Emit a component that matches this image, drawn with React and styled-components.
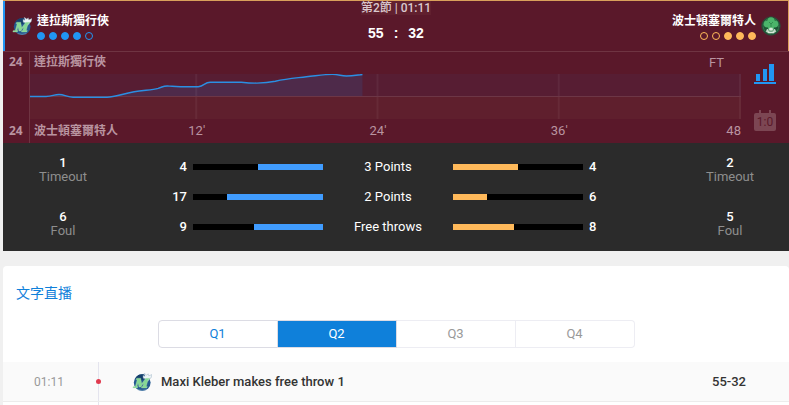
import React, { useState } from "react";
import styled, { createGlobalStyle } from "styled-components";

const GlobalStyle = createGlobalStyle`
  * { box-sizing: border-box; }
  body {
    margin: 0;
    background: #f0f0f0;
    font-family: Roboto, "Noto Sans CJK TC", sans-serif;
    font-size: 13px;
    color: #fff;
  }
  button { font: inherit; padding: 0; margin: 0; cursor: pointer; }
  h2, p { margin: 0; }
`;

const Page = styled.main`
  padding-left: 3px;
`;

const ScoreHeader = styled.header`
  display: grid;
  grid-template-columns: 1fr auto 1fr;
  height: 52px;
  background: #5a182a;
  border-top: 1px solid #d9a05b;
  border-bottom: 1px solid #6f3442;
`;

const Team = styled.div`
  display: flex;
  flex-direction: ${(p) => (p.$away ? "row-reverse" : "row")};
  gap: 5px;
  padding: 12px 7px 0;
  border-${(p) => (p.$away ? "right" : "left")}: ${(p) => (p.$away ? "1px solid #d9a05b" : "2px solid #2196f3")};
`;

const LogoSlot = styled.span`
  display: flex;
  padding-top: 3px;
`;

const TeamInfo = styled.div`
  display: flex;
  flex-direction: column;
  gap: 2px;
  align-items: ${(p) => (p.$away ? "flex-end" : "flex-start")};
`;

const TeamName = styled.span`
  font-size: 12px;
  line-height: 17px;
  font-weight: 700;
  white-space: nowrap;
`;

const Dots = styled.div`
  display: flex;
  gap: 4px;
`;

const Dot = styled.i`
  width: 8px;
  height: 8px;
  border-radius: 50%;
  border: 1px solid ${(p) => p.$color};
  background: ${(p) => (p.$filled ? p.$color : "transparent")};
`;

const Clock = styled.div`
  display: flex;
  flex-direction: column;
  align-items: center;
  gap: 10px;
  white-space: nowrap;
`;

const Period = styled.span`
  font-size: 12px;
  line-height: 14px;
  font-weight: 500;
  color: #dac8cd;
  background: #61202f;
`;

const Score = styled.strong`
  display: flex;
  gap: 10px;
  font-family: "Liberation Sans", Arial, sans-serif;
  font-size: 14px;
  line-height: 16px;
`;

const Momentum = styled.section`
  display: grid;
  grid-template-columns: 27px 1fr 48px;
  height: 91px;
  background: #5a182a;
  color: #b994a0;
`;

const Leads = styled.div`
  display: flex;
  flex-direction: column;
  justify-content: space-between;
  padding: 1px 0 4px 6px;
  font-family: "Open Sans", sans-serif;
  font-size: 12px;
  line-height: 17px;
  font-weight: 700;
  border-right: 1px solid #6f3442;
`;

const Graph = styled.div`
  min-width: 0;
`;

const GraphHead = styled.div`
  display: flex;
  justify-content: space-between;
  padding: 2px 17px 3px 4px;
  line-height: 17px;
`;

const Plot = styled.svg`
  display: block;
  width: 100%;
  height: 46px;
`;

const Axis = styled.div`
  display: grid;
  grid-template-columns: 76fr 181fr 181fr 181fr 91fr;
  padding-top: 2px;
  line-height: 17px;
`;

const AxisTeam = styled(TeamName)`
  grid-area: 1 / 1 / 2 / 3;
  padding: 1px 0 0 4px;
`;

const Tick = styled.span`
  grid-row: 1;
  grid-column: ${(p) => p.$col};
  text-align: ${(p) => (p.$last ? "right" : "center")};
`;

const ViewSwitch = styled.div`
  display: flex;
  flex-direction: column;
  align-items: center;
  gap: 25px;
  padding-top: 12px;
`;

const IconButton = styled.button`
  display: block;
  width: 22px;
  height: 21px;
  border: 0;
  background: none;
  svg { display: block; }
`;

const Stats = styled.section`
  display: grid;
  grid-template-columns: 120px 1fr 118px;
  height: 108px;
  background: #2b2b2b;
`;

const SideStats = styled.div`
  display: flex;
  flex-direction: column;
  gap: 26px;
  padding-top: 13px;
  text-align: center;
  line-height: 14px;
`;

const SideValue = styled.div`
  font-weight: 500;
`;

const SideLabel = styled.div`
  color: #8e8e8e;
`;

const BarRows = styled.div`
  display: flex;
  flex-direction: column;
  gap: 10px;
  padding-top: 14px;
`;

const BarRow = styled.div`
  display: grid;
  grid-template-columns: 70px 1fr 1fr 1fr 88px;
  align-items: center;
  line-height: 20px;
  font-weight: 500;
  text-align: center;
`;

const BarValue = styled.span`
  padding: 0 6px;
  text-align: ${(p) => (p.$away ? "left" : "right")};
`;

const BarLabel = styled.span`
  font-weight: 400;
`;

const Track = styled.div`
  display: flex;
  justify-content: ${(p) => (p.$away ? "flex-start" : "flex-end")};
  height: 6px;
  background: #000;
`;

const Fill = styled.div`
  background: ${(p) => (p.$away ? "#ffb95a" : "#409cff")};
`;

const Feed = styled.section`
  margin-top: 15px;
  background: #fff;
  border-radius: 4px 4px 0 0;
  color: #333;
`;

const FeedTitle = styled.h2`
  padding: 17px 13px 0;
  font-size: 14px;
  line-height: 20px;
  font-weight: 400;
  color: #0f80da;
`;

const Tabs = styled.div`
  display: flex;
  width: 477px;
  max-width: 100%;
  margin: 17px auto 14px;
  line-height: 26px;
`;

const Tab = styled.button`
  flex: 1;
  height: 28px;
  border: 1px solid ${(p) => (p.disabled ? "#ededf3" : "#dcdce4")};
  border-left-width: ${(p) => (p.$first ? 1 : 0)}px;
  border-radius: ${(p) => (p.$first ? "4px 0 0 4px" : p.$last ? "0 4px 4px 0" : "0")};
  background: ${(p) => (p.$active ? "#0f80da" : "#fff")};
  color: ${(p) => (p.$active ? "#fff" : p.disabled ? "#999" : "#0f80da")};
`;

const EventList = styled.div`
  display: flex;
  flex-direction: column;
`;

const EventRow = styled.div`
  display: grid;
  grid-template-columns: 95px 34px 29px 1fr 120px;
  align-items: center;
  height: ${(p) => (p.$empty ? 4 : 40)}px;
  background: ${(p) => (p.$empty ? "#fff" : "#fafafa")};
  border-bottom: ${(p) => (p.$empty ? 0 : 1)}px solid #ececec;
  font-weight: 500;
`;

const EventTime = styled.time`
  text-align: center;
  padding-right: 3px;
  font-size: 12px;
  font-weight: 400;
  color: #999;
`;

const Timeline = styled.span`
  display: flex;
  align-items: center;
  align-self: stretch;
  border-left: 1px solid #e4e4ee;
`;

const Marker = styled.i`
  width: 5px;
  height: 5px;
  margin-left: -3px;
  border-radius: 50%;
  background: #e03a4e;
`;

const EventScore = styled.span`
  text-align: center;
`;

function MavsLogo() {
  return (
    <svg width="20" height="20" viewBox="0 0 20 20" role="img" aria-label="達拉斯獨行俠">
      <circle cx="10.2" cy="10.6" r="8.4" fill="#24598f" />
      <path d="M3.2 6.6A8.4 8.4 0 0 1 12 2.4l1.6 4.2-5 2.2z" fill="#143f6b" />
      <path d="M11 3.4l2 .9-.8-3 2.6 1.8 1.4-1.3.6 2L20 2.6l-1 3.4-1.8 1-1.4 2.4-2-2.4-2.6-.8z" fill="#eef5f7" stroke="#8aa5ba" strokeWidth=".4" />
      <path d="M.8 16h4.6l.5-1.6H5l1-3.6 1 4.2h1.8l3-4.2-1 3.6h-1L9.400 16h5.400l.5-1.600h-1.100l1.900-6.600h1.100l.5-1.600h-3.900l-4.100 5.600-1-5.600H4.600l-.5 1.600h1.100l-1.900 6.600H1.300z" fill="#86d894" stroke="#b9e8c0" strokeWidth=".3" />
      <path d="M5.500 17.600q4.500 1.500 9 0" stroke="#82a8c8" strokeWidth=".6" fill="none" />
    </svg>
  );
}

function CelticsLogo() {
  return (
    <svg width="20" height="20" viewBox="0 0 20 20" role="img" aria-label="波士頓塞爾特人">
      <circle cx="10" cy="10" r="9.3" fill="#1c5534" stroke="#33463b" strokeWidth=".8" />
      <circle cx="10" cy="10" r="7.8" fill="none" stroke="#4a8f63" strokeWidth=".9" strokeDasharray="1 .5" />
      <circle cx="10" cy="4.800" r="3.600" fill="#4bb56a" />
      <circle cx="6.300" cy="8" r="3.500" fill="#4bb56a" />
      <circle cx="13.700" cy="8" r="3.500" fill="#4bb56a" />
      <path d="M7 8h6v5H7z" fill="#4bb56a" />
      <path d="M8 6l2 2 2-2M10 8v3" stroke="#2c8148" strokeWidth=".8" fill="none" />
      <path d="M5 15.500l1-2.500 2 .8.500-2h3l.5 2 2-.8 1 2.500-2.500 1.700h-5z" fill="#d9eadb" />
      <path d="M6.500 15l2-.6.500 1.600 1-1.600 1 1.600.5-1.600 2 .6" stroke="#378253" fill="none" strokeWidth=".6" />
    </svg>
  );
}

const CURVE =
  "M0 22.5H16C22 22.5 24 20.5 29 20.5S38 23.2 43 23.2H77C85 23.2 92 19.8 104 17.8C114 16 122 16.3 128 14.3C135 11.5 135 12 142 12.2C150 12.8 160 12.8 168 12.7C174 12.3 174 8.3 180 8.2H211C221 9.3 234 9.7 245 7.3C257 4.4 264 4.2 276 2.8C288 1.5 294 .4 302 .4C309 .4 310 2 316 2S326 1.2 332 .5";

const GRID = [166, 347, 528, 709];

function LeadPlot() {
  return (
    <Plot viewBox="0 0 710 46" preserveAspectRatio="none" aria-hidden="true">
      <rect width="710" height="22" fill="#571d33" />
      <rect y="22" width="710" height="23" fill="#5f1f2d" />
      <path d={`${CURVE}V22H0Z`} fill="#4e2a4a" />
      {GRID.map((x) => (
        <rect key={x} x={x - 1} width="2" height="45" fill="#fff" fillOpacity=".05" />
      ))}
      <rect y="22" width="710" height="1" fill="#6d3646" />
      <path d={CURVE} fill="none" stroke="#2b8fe3" strokeWidth="1.4" vectorEffect="non-scaling-stroke" />
    </Plot>
  );
}

function BarsIcon() {
  return (
    <svg width="22" height="21" viewBox="0 0 22 21" aria-hidden="true">
      <path d="M2 10h4v7H2zM9 5h4v12H9zM15 0h5v17h-5zM0 18h22v2H0z" fill="#2196f3" />
    </svg>
  );
}

function ScoreboardIcon() {
  return (
    <svg width="22" height="21" viewBox="0 0 22 21" aria-hidden="true">
      <path d="M5 0h2v3h8V0h2v3h3a2 2 0 0 1 2 2v14a2 2 0 0 1-2 2H2a2 2 0 0 1-2-2V5a2 2 0 0 1 2-2h3z" fill="#7c4653" />
      <text x="11" y="16" textAnchor="middle" fontFamily="Roboto, sans-serif" fontSize="12" fill="#5a182a">1:0</text>
    </svg>
  );
}

function TeamBlock({ name, away, dots, color, logo }) {
  return (
    <Team $away={away}>
      <LogoSlot>{logo}</LogoSlot>
      <TeamInfo $away={away}>
        <TeamName>{name}</TeamName>
        <Dots>
          {dots.map((on, i) => (
            <Dot key={i} $filled={on} $color={color} />
          ))}
        </Dots>
      </TeamInfo>
    </Team>
  );
}

function SideBlock({ timeouts, fouls }) {
  return (
    <SideStats>
      <div>
        <SideValue>{timeouts}</SideValue>
        <SideLabel>Timeout</SideLabel>
      </div>
      <div>
        <SideValue>{fouls}</SideValue>
        <SideLabel>Foul</SideLabel>
      </div>
    </SideStats>
  );
}

const SHOTS = [
  { label: "3 Points", home: 4, away: 4 },
  { label: "2 Points", home: 17, away: 6 },
  { label: "Free throws", home: 9, away: 8 },
];

const QUARTERS = ["Q1", "Q2", "Q3", "Q4"];

export default function App() {
  const [quarter, setQuarter] = useState("Q2");
  return (
    <Page>
      <GlobalStyle />
      <ScoreHeader>
        <TeamBlock name="達拉斯獨行俠" dots={[true, true, true, true, false]} color="#2196f3" logo={<MavsLogo />} />
        <Clock>
          <Period>第2節 | 01:11</Period>
          <Score>
            <span>55</span>
            <span>:</span>
            <span>32</span>
          </Score>
        </Clock>
        <TeamBlock away name="波士頓塞爾特人" dots={[false, false, true, true, true]} color="#ffb95a" logo={<CelticsLogo />} />
      </ScoreHeader>

      <Momentum>
        <Leads>
          <span>24</span>
          <span>24</span>
        </Leads>
        <Graph>
          <GraphHead>
            <TeamName>達拉斯獨行俠</TeamName>
            <span>FT</span>
          </GraphHead>
          <LeadPlot />
          <Axis>
            <AxisTeam>波士頓塞爾特人</AxisTeam>
            <Tick $col={2}>12'</Tick>
            <Tick $col={3}>24'</Tick>
            <Tick $col={4}>36'</Tick>
            <Tick $col={5} $last>48</Tick>
          </Axis>
        </Graph>
        <ViewSwitch>
          <IconButton type="button" aria-label="Chart"><BarsIcon /></IconButton>
          <IconButton type="button" aria-label="Scoreboard"><ScoreboardIcon /></IconButton>
        </ViewSwitch>
      </Momentum>

      <Stats>
        <SideBlock timeouts={1} fouls={6} />
        <BarRows>
          {SHOTS.map(({ label, home, away }) => (
            <BarRow key={label}>
              <BarValue>{home}</BarValue>
              <Track><Fill style={{ width: `${(home / (home + away)) * 100}%` }} /></Track>
              <BarLabel>{label}</BarLabel>
              <Track $away><Fill $away style={{ width: `${(away / (home + away)) * 100}%` }} /></Track>
              <BarValue $away>{away}</BarValue>
            </BarRow>
          ))}
        </BarRows>
        <SideBlock timeouts={2} fouls={5} />
      </Stats>

      <Feed>
        <FeedTitle>文字直播</FeedTitle>
        <Tabs role="tablist">
          {QUARTERS.map((q, i) => (
            <Tab
              key={q}
              type="button"
              role="tab"
              aria-selected={q === quarter}
              $active={q === quarter}
              $first={i === 0}
              $last={i === QUARTERS.length - 1}
              disabled={i > 1}
              onClick={() => setQuarter(q)}
            >
              {q}
            </Tab>
          ))}
        </Tabs>
        <EventList>
          <EventRow>
            <EventTime>01:11</EventTime>
            <Timeline><Marker /></Timeline>
            <MavsLogo />
            <span>Maxi Kleber makes free throw 1</span>
            <EventScore>55-32</EventScore>
          </EventRow>
          <EventRow $empty>
            <span />
            <Timeline />
          </EventRow>
        </EventList>
      </Feed>
    </Page>
  );
}
